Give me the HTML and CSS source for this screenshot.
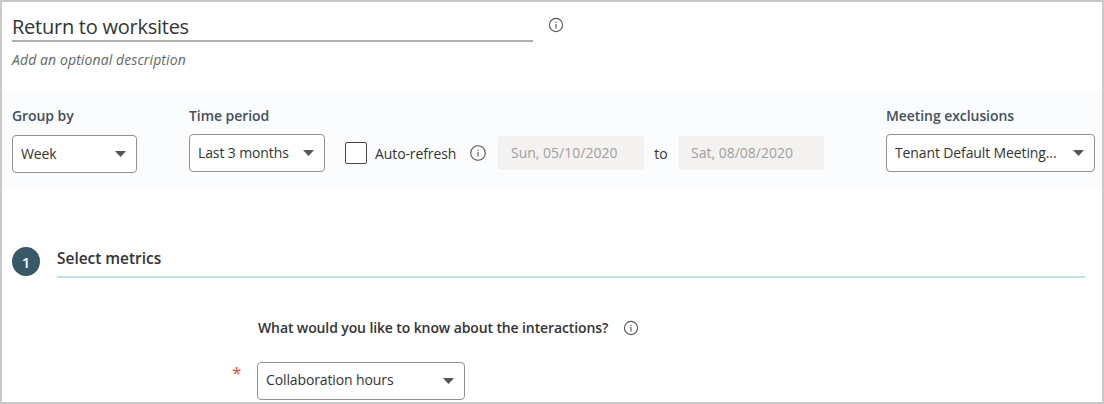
FILE: index.html
```html
<!DOCTYPE html>
<html lang="en">
<head>
<meta charset="utf-8">
<title>Return to worksites</title>
<link rel="stylesheet" href="styles.css">
</head>
<body>
<main class="page">
  <header class="header">
    <div class="names">
      <h1 class="title">Return to worksites</h1>
      <p class="description">Add an optional description</p>
    </div>
    <svg class="info info-title" viewBox="0 0 16 16"><circle cx="8" cy="8" r="6.6"/><path d="M8 7v4.4M8 4.7v1.2"/></svg>
  </header>
  <section class="filters">
    <div class="field field-group">
      <div class="label">Group by</div>
      <div class="select"><span>Week</span><svg class="caret" viewBox="0 0 11 6"><path d="M0 0h11L5.5 6z"/></svg></div>
    </div>
    <div class="field field-period">
      <div class="label">Time period</div>
      <div class="select"><span>Last 3 months</span><svg class="caret" viewBox="0 0 11 6"><path d="M0 0h11L5.5 6z"/></svg></div>
    </div>
    <div class="range">
      <span class="checkbox"></span>
      <span class="refresh">Auto-refresh</span>
      <svg class="info info-refresh" viewBox="0 0 16 16"><circle cx="8" cy="8" r="7.3"/><path d="M8 7v4.4M8 4.7v1.2"/></svg>
      <span class="date">Sun, 05/10/2020</span>
      <span class="to">to</span>
      <span class="date">Sat, 08/08/2020</span>
    </div>
    <div class="field field-meeting">
      <div class="label">Meeting exclusions</div>
      <div class="select"><span>Tenant Default Meeting...</span><svg class="caret" viewBox="0 0 11 6"><path d="M0 0h11L5.5 6z"/></svg></div>
    </div>
  </section>
  <section class="step">
    <div class="step-number">1</div>
    <h2 class="step-title">Select metrics</h2>
  </section>
  <section class="metric">
    <div class="question"><span>What would you like to know about the interactions?</span><svg class="info info-question" viewBox="0 0 16 16"><circle cx="8" cy="8" r="6.6"/><path d="M8 7v4.4M8 4.7v1.2"/></svg></div>
    <div class="answer">
      <span class="required">*</span>
      <div class="select"><span>Collaboration hours</span><svg class="caret" viewBox="0 0 11 6"><path d="M0 0h11L5.5 6z"/></svg></div>
    </div>
  </section>
</main>
</body>
</html>
```
FILE: styles.css
```css
* { box-sizing: border-box; }
body { margin: 0; font-family: "Open Sans", "Noto Sans", sans-serif; font-size: 14px; color: #333; }
h1, h2, p { margin: 0; }
span, div { white-space: nowrap; }
.page { width: 1104px; height: 404px; border: 2px solid #c9c9c9; background: #fff; overflow: hidden; }
.header { display: flex; height: 89px; padding-left: 10px; }
.names { width: 521px; }
.title { height: 40px; padding-top: 10px; border-bottom: 2px solid #b0b0b0; font-size: 20px; font-weight: 400; line-height: 29px; letter-spacing: -0.25px; }
.description { padding-top: 8px; font-size: 14px; font-style: italic; line-height: 20px; letter-spacing: 0.1px; color: #666; }
.info { flex: none; width: 16px; height: 16px; fill: none; stroke: #555; stroke-width: 1.1; }
.info-title { margin: 15px 0 0 15px; }
.filters { display: flex; height: 97px; padding: 15px 7px 0 10px; background: #fbfcfe; }
.label { height: 27px; padding-bottom: 7px; font-weight: 600; line-height: 20px; letter-spacing: -0.07px; color: #44505a; }
.select { display: flex; align-items: center; justify-content: space-between; height: 38px; padding: 0 10px 1px 8px; border: 1px solid #919191; border-radius: 4px; background: #fff; line-height: 20px; letter-spacing: -0.12px; }
.caret { flex: none; width: 11px; height: 6px; margin-top: 1px; fill: #555; }
.field-group { width: 125px; margin-right: 52px; }
.field-group .label { height: 29px; }
.field-period { width: 136px; margin-right: 20px; }
.field-period .label, .field-meeting .label { height: 28px; }
.field-meeting { width: 209px; margin-left: auto; }
.range { display: flex; align-items: center; height: 34px; margin-top: 30px; }
.checkbox { width: 22px; height: 22px; margin-right: 8px; border: 1.5px solid #444; border-radius: 2px; background: #fff; }
.refresh { width: 95px; letter-spacing: -0.1px; }
.info-refresh { margin-right: 12px; }
.date { width: 146px; height: 34px; padding-left: 13px; border-radius: 3px; background: #f3f2f1; line-height: 34px; color: #a19f9d; }
.to { width: 34px; text-align: center; }
.step { display: flex; height: 60px; margin-top: 59px; padding-left: 10px; }
.step-number { width: 28px; height: 29px; margin-right: 17px; border-radius: 50%; background: #385767; color: #fff; font-size: 15px; font-weight: 600; line-height: 31px; text-align: center; }
.step-title { width: 1028px; height: 31px; border-bottom: 2px solid #bfe1e8; font-size: 15.5px; font-weight: 600; line-height: 22px; letter-spacing: -0.03px; }
.metric { padding-left: 230px; }
.question { display: flex; align-items: center; height: 32px; margin-top: 7px; padding: 0 0 5px 26px; font-weight: 600; line-height: 20px; letter-spacing: -0.115px; }
.info-question { margin-left: 15px; }
.answer { display: flex; margin-top: 16px; }
.required { width: 25px; color: #f04438; font-size: 17px; line-height: 21px; }
.answer .select { width: 208px; height: 38px; padding-bottom: 2px; }
```
